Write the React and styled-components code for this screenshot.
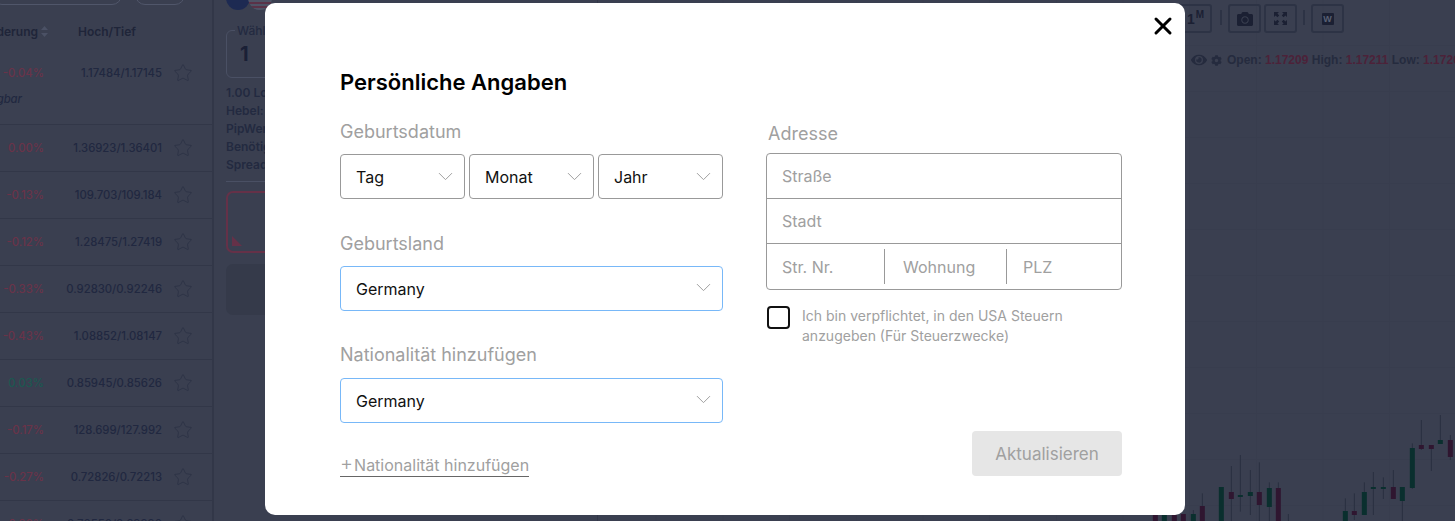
import React from "react";
import styled, { createGlobalStyle } from "styled-components";
import { Star, ChevronDown, X } from "lucide-react";
import { FaCamera, FaEye, FaCog } from "react-icons/fa";

const Global = createGlobalStyle`
  html, body { margin: 0; padding: 0; height: 100%; overflow: hidden; background: #3a3f50; }
  * { box-sizing: border-box; }
  body { font-family: Inter, "Liberation Sans", sans-serif; }
`;

const Page = styled.div`
  width: 1455px; height: 521px; display: flex; overflow: hidden; background: #3a3f50; color: #1f2539;
`;

/* ---------- instrument list ---------- */
const List = styled.section`
  width: 214px; flex: none; border-right: 2px solid #323748; display: flex; flex-direction: column; overflow: hidden;
`;
const PillBar = styled.div`
  height: 5px; display: flex; gap: 13px; align-items: flex-end; flex: none;
`;
const Pill = styled.div`
  width: ${p => p.$w}px; height: 20px; flex: none; margin-left: ${p => p.$ml || 0}px;
  border: 1px solid #50566a; border-radius: 10px;
`;
const HeadRow = styled.div`
  height: 45px; flex: none; display: grid; grid-template-columns: 48px 114px 1fr; align-items: center;
  font-size: 12px; font-weight: 600; color: #1f2539; padding-top: 7px;
`;
const SortHead = styled.div`
  display: flex; justify-content: flex-end; align-items: center; gap: 3px; overflow: hidden; white-space: nowrap;
`;
const TallHead = styled.div`
  padding-left: 30px; white-space: nowrap;
`;
const Row = styled.div`
  height: ${p => p.$tall ? 75 : 47}px; flex: none; border-bottom: 1px solid #323748;
  display: flex; flex-direction: column; padding-top: ${p => p.$tall ? 13 : 0}px;
  justify-content: ${p => p.$tall ? "flex-start" : "center"};
  background: ${p => p.$tall ? "#3b4051" : "transparent"};
`;
const RowMain = styled.div`
  display: grid; grid-template-columns: 44px 118px 1fr; align-items: center; height: 20px;
  font-size: 11.3px; font-weight: 500;
`;
const Pct = styled.span`
  text-align: right; color: ${p => p.$up ? "#1c5850" : "#6a3349"}; white-space: nowrap;
`;
const Range = styled.span`
  text-align: right; color: #212840; white-space: nowrap;
`;
const StarCell = styled.span`
  display: flex; justify-content: flex-end; padding-right: 19px; color: #2b3144;
`;
const Unavailable = styled.div`
  width: 22px; margin-top: 9px; display: flex; justify-content: flex-end; white-space: nowrap;
  font-size: 11.3px; font-style: italic; font-weight: 500; color: #212840; line-height: 14px;
`;

/* ---------- order panel ---------- */
const Panel = styled.section`
  width: 384px; flex: none; border-right: 1px solid #323748; padding: 0 12px; display: flex; flex-direction: column; overflow: hidden;
`;
const FlagRow = styled.div`
  height: 10px; flex: none; display: flex; align-items: flex-end; overflow: hidden;
`;
const Flag = styled.span`
  width: 24px; height: 24px; flex: none; border-radius: 50%; background: #1d2a52;
`;
const StripedFlag = styled(Flag)`
  margin-left: -2px;
  background: repeating-linear-gradient(180deg, #5a3248 0 2px, #4e5366 2px 4px);
`;
const Field = styled.div`
  position: relative; height: 48px; margin-top: 20px; flex: none; border: 1px solid #4a5064; border-radius: 6px;
  padding: 11px 13px; font-size: 20px; font-weight: 700; color: #1a2036; line-height: 24px;
`;
const FieldLabel = styled.span`
  position: absolute; left: 8px; top: -7px; padding: 0 2px; background: #3a3f50; font-size: 12px; font-weight: 500; line-height: 14px; color: #232a40;
`;
const Facts = styled.div`
  margin-top: 6px; font-size: 12px; font-weight: 600; line-height: 18px; color: #232a40; white-space: nowrap; flex: none;
`;
const Divider = styled.div`
  height: 1px; background: #4a5064; margin-top: 7px; flex: none;
`;
const SellBox = styled.div`
  height: 62px; margin-top: 9px; flex: none; border: 2px solid #653148; border-radius: 7px; display: flex; align-items: flex-end; padding: 0 0 5px 4px;
`;
const Corner = styled.span`
  width: 0; height: 0; border-style: solid; border-width: 10px 0 0 10px; border-color: transparent transparent transparent #653148;
`;
const GreyBlock = styled.div`
  height: 51px; margin-top: 11px; flex: none; border-radius: 7px; background: #353a4a;
`;

/* ---------- chart ---------- */
const Chart = styled.section`
  flex: 1; min-width: 0; display: flex; flex-direction: column; overflow: hidden;
  background-image:
    linear-gradient(#383d4e 1px, transparent 1px),
    linear-gradient(90deg, #383d4e 1px, transparent 1px);
  background-size: 66.7px 46px;
  background-position: 0 -1px, -9px 0;
`;
const Toolbar = styled.div`
  height: 29px; margin-top: 4px; flex: none; display: flex; align-items: center; justify-content: flex-end; padding-right: 111px; gap: 3px;
`;
const ToolBtn = styled.div`
  width: 33px; height: 29px; flex: none; display: flex; align-items: center; justify-content: center;
  border: 2px solid #2d3345; border-radius: 3px; color: #1b2033;
  font-family: "Liberation Sans", sans-serif; font-weight: 700; font-size: 14px;
  sup { font-size: 10px; line-height: 10px; margin: 4px 0 0 1px; align-self: flex-start; }
`;
const ToolSep = styled.span`
  width: 2px; height: 15px; flex: none; background: #2d3345; margin: 0 3px 2px ${p => p.$left || 3}px;
`;
const WBadge = styled.span`
  width: 12px; height: 12px; background: #1b2033; color: #5a6074; font-size: 9px; font-weight: 700; text-align: center; line-height: 12px; border-radius: 1px;
`;
const Ohlc = styled.div`
  margin-top: 19px; padding-left: 593px; display: flex; align-items: center; gap: 4px; flex: none; white-space: nowrap; height: 16px;
  font-family: "Liberation Sans", sans-serif; font-size: 12px; font-weight: 700; color: #252b3e;
  b { color: #4c2239; font-weight: 700; }
  svg { flex: none; }
`;
const Quote = styled.span`
  margin-left: 1px; flex: none;
`;
const Candles = styled.svg`
  margin-top: auto; align-self: flex-end; flex: none; display: block;
`;

/* ---------- dialog ---------- */
const Dialog = styled.div`
  position: fixed; left: 265px; top: 3px; width: 920px; height: 512px; background: #fff; border-radius: 10px;
  padding: 65px 63px 39px 75px; display: flex; flex-direction: column; color: #000;
`;
const Close = styled.button`
  position: absolute; top: 9px; right: 8px; width: 28px; height: 28px; padding: 0; border: 0; background: none; color: #000; display: flex; align-items: center; justify-content: center;
`;
const Title = styled.h2`
  margin: 0; font-size: 22px; line-height: 28px; font-weight: 600; color: #000; flex: none;
`;
const Columns = styled.div`
  flex: 1; display: grid; grid-template-columns: 383px 356px; column-gap: 43px; min-height: 0;
`;
const Col = styled.div`
  display: flex; flex-direction: column; min-height: 0;
`;
const Label = styled.div`
  flex: none; font-size: 18px; line-height: 22px; color: #a0a0a0; margin-top: ${p => p.$mt}px; margin-left: ${p => p.$ml || 0}px; font-weight: 400;
`;
const DateRow = styled.div`
  flex: none; display: grid; grid-template-columns: repeat(3, 125px); gap: 4px; margin-top: 11px;
`;
const Select = styled.div`
  flex: none; height: 45px; display: flex; align-items: center; justify-content: space-between;
  padding: 0 6px 0 15px;
  border: 1px solid ${p => p.$focus ? "#78b8f8" : "#999"}; border-radius: 4px; font-size: 16px; color: #111;
  margin-top: ${p => p.$mt || 0}px;
  svg { color: #a0a0a0; flex: none; margin-top: ${p => p.$focus ? "-2px" : "0"}; }
`;
const AddLink = styled.a`
  flex: none; align-self: flex-start; margin-top: 32px; height: 22px; display: flex; align-items: center; gap: 1px; font-size: 16px; color: #a0a0a0; border-bottom: 1px solid #666; line-height: 20px; padding-bottom: 1px;
`;
const Plus = styled.span`
  font-size: 20px; line-height: 18px; font-weight: 300; margin-top: -4px;
`;
const AddressBox = styled.div`
  margin-top: 8px; height: 137px; flex: none; border: 1px solid #999; border-radius: 4px; display: flex; flex-direction: column;
`;
const AddrRow = styled.div`
  height: 45px; flex: none; display: flex; align-items: center; padding-left: 15px; font-size: 16px; color: #a0a0a0; border-bottom: 1px solid #999;
`;
const AddrSplit = styled.div`
  flex: 1; display: grid; grid-template-columns: 118px 122px 1fr; align-items: center; font-size: 16px; color: #a0a0a0;
`;
const AddrCell = styled.div`
  height: 35px; display: flex; align-items: center; padding-left: ${p => p.$pl}px;
  border-right: ${p => p.$sep ? "1px solid #999" : "0"};
`;
const TaxRow = styled.label`
  flex: none; display: flex; gap: 12px; margin-top: 16px; margin-left: 1px;
`;
const Check = styled.span`
  width: 23px; height: 23px; flex: none; border: 2px solid #111; border-radius: 4px;
`;
const TaxText = styled.span`
  font-size: 14px; line-height: 20px; color: #a0a0a0;
`;
const Submit = styled.button`
  flex: none; margin-top: auto; align-self: flex-end; width: 150px; height: 45px; border: 0; border-radius: 4px; background: #e6e6e6; color: #a0a0a0;
  font-family: inherit; font-size: 17px;
`;

const rows = [
  ["0.00%", "1.36923/1.36401"],
  ["-0.13%", "109.703/109.184"],
  ["-0.12%", "1.28475/1.27419"],
  ["-0.33%", "0.92830/0.92246"],
  ["-0.43%", "1.08852/1.08147"],
  ["0.03%", "0.85945/0.85626", true],
  ["-0.17%", "128.699/127.992"],
  ["-0.27%", "0.72826/0.72213"],
  ["-0.38%", "0.70550/0.69990"],
];

/* x, bodyTop, bodyBottom, wickTop, wickBottom, up — in 3x units of the bottom right corner */
const candles = [
  [46, 345, 370, 345, 370, 0], [73, 345, 370, 345, 370, 1], [103, 345, 363, 345, 363, 0],
  [130, 342, 370, 342, 370, 0], [160, 342, 370, 330, 370, 1], [187, 318, 370, 280, 370, 0],
  [244, 261, 370, 261, 370, 1], [274, 276, 297, 198, 370, 0], [301, 285, 291, 165, 335, 1],
  [331, 276, 288, 210, 345, 1], [358, 276, 315, 187, 370, 0], [388, 264, 321, 247, 370, 1],
  [415, 264, 370, 247, 370, 0], [445, 345, 345, 342, 370, 0], [616, 333, 370, 295, 370, 1],
  [643, 333, 345, 280, 360, 0], [673, 276, 345, 247, 345, 1], [700, 261, 267, 216, 345, 1],
  [730, 261, 267, 232, 297, 1], [760, 261, 297, 210, 297, 0], [787, 261, 303, 261, 370, 1],
  [817, 144, 264, 130, 267, 1], [844, 135, 147, 60, 150, 0], [874, 135, 147, 135, 213, 0],
  [901, 120, 132, 45, 132, 1], [931, 120, 171, 105, 180, 0],
];

function ExpandIcon() {
  return (
    <svg width="15" height="15" viewBox="0 0 15 15" fill="#1b2033">
      <path d="M1 1h5L4.4 2.6 6.2 4.4 4.4 6.2 2.6 4.4 1 6z" />
      <path d="M14 1H9l1.6 1.6L8.8 4.4l1.8 1.8 1.8-1.8L14 6z" />
      <path d="M1 14h5l-1.6-1.6 1.8-1.8-1.8-1.8-1.8 1.8L1 9z" />
      <path d="M14 14H9l1.6-1.6-1.8-1.8 1.8-1.8 1.8 1.8L14 9z" />
    </svg>
  );
}

function SortIcon() {
  return (
    <svg width="7" height="11" viewBox="0 0 7 11" fill="#4b5165" style={{ flex: "none" }}>
      <path d="M3.5 0 7 4H0zM3.5 11 0 7h7z" />
    </svg>
  );
}

const Chevron = () => <ChevronDown size={25} strokeWidth={1} absoluteStrokeWidth />;

export default function App() {
  return (
    <Page>
      <Global />
      <List>
        <PillBar>
          <Pill $w={130} $ml={-8} />
          <Pill $w={50} />
        </PillBar>
        <HeadRow>
          <SortHead>Änderung <SortIcon /></SortHead>
          <TallHead>Hoch/Tief</TallHead>
        </HeadRow>
        <Row $tall>
          <RowMain>
            <Pct>-0.04%</Pct>
            <Range>1.17484/1.17145</Range>
            <StarCell><Star size={20} strokeWidth={1} /></StarCell>
          </RowMain>
          <Unavailable>Nicht verfügbar</Unavailable>
        </Row>
        {rows.map(([pct, range, up]) => (
          <Row key={range}>
            <RowMain>
              <Pct $up={up}>{pct}</Pct>
              <Range>{range}</Range>
              <StarCell><Star size={20} strokeWidth={1} /></StarCell>
            </RowMain>
          </Row>
        ))}
      </List>

      <Panel>
        <FlagRow>
          <Flag />
          <StripedFlag />
        </FlagRow>
        <Field>
          <FieldLabel>Wählen</FieldLabel>
          1
        </Field>
        <Facts>
          1.00 Lot<br />
          Hebel: 1:30<br />
          PipWert: 10<br />
          Benötigte Marge<br />
          Spread
        </Facts>
        <Divider />
        <SellBox><Corner /></SellBox>
        <GreyBlock />
      </Panel>

      <Chart>
        <Toolbar>
          <ToolBtn>1<sup>M</sup></ToolBtn>
          <ToolSep $left={5} />
          <ToolBtn><FaCamera size={16} /></ToolBtn>
          <ToolBtn><ExpandIcon /></ToolBtn>
          <ToolSep />
          <ToolBtn><WBadge>W</WBadge></ToolBtn>
        </Toolbar>
        <Ohlc>
          <FaEye size={16} />
          <FaCog size={11} />
          <Quote>Open: <b>1.17209</b> High: <b>1.17211</b> Low: <b>1.17204</b> Close: <b>1.17209</b></Quote>
        </Ohlc>
        <Candles width="315" height="121" viewBox="0 0 945 363">
          {candles.map(([x, t, b, wt, wb, up]) => (
            <g key={x}>
              <line x1={x} x2={x} y1={wt} y2={wb} stroke="#2a2f40" strokeWidth="3" />
              {b > t && <rect x={x - 7.5} y={t} width="15" height={b - t} fill={up ? "#0a2f2e" : "#2f1630"} />}
            </g>
          ))}
        </Candles>
      </Chart>

      <Dialog>
        <Close aria-label="Schließen"><X size={28} strokeWidth={3} absoluteStrokeWidth /></Close>
        <Title>Persönliche Angaben</Title>
        <Columns>
          <Col>
            <Label $mt={25}>Geburtsdatum</Label>
            <DateRow>
              <Select>Tag <Chevron /></Select>
              <Select>Monat <Chevron /></Select>
              <Select>Jahr <Chevron /></Select>
            </DateRow>
            <Label $mt={34}>Geburtsland</Label>
            <Select $focus $mt={11}>Germany <Chevron /></Select>
            <Label $mt={33}>Nationalität hinzufügen</Label>
            <Select $focus $mt={12}>Germany <Chevron /></Select>
            <AddLink><Plus>+</Plus>Nationalität hinzufügen</AddLink>
          </Col>
          <Col>
            <Label $mt={27} $ml={2}>Adresse</Label>
            <AddressBox>
              <AddrRow>Straße</AddrRow>
              <AddrRow>Stadt</AddrRow>
              <AddrSplit>
                <AddrCell $pl={15} $sep>Str. Nr.</AddrCell>
                <AddrCell $pl={18} $sep>Wohnung</AddrCell>
                <AddrCell $pl={16}>PLZ</AddrCell>
              </AddrSplit>
            </AddressBox>
            <TaxRow>
              <Check />
              <TaxText>Ich bin verpflichtet, in den USA Steuern<br />anzugeben (Für Steuerzwecke)</TaxText>
            </TaxRow>
            <Submit>Aktualisieren</Submit>
          </Col>
        </Columns>
      </Dialog>
    </Page>
  );
}
